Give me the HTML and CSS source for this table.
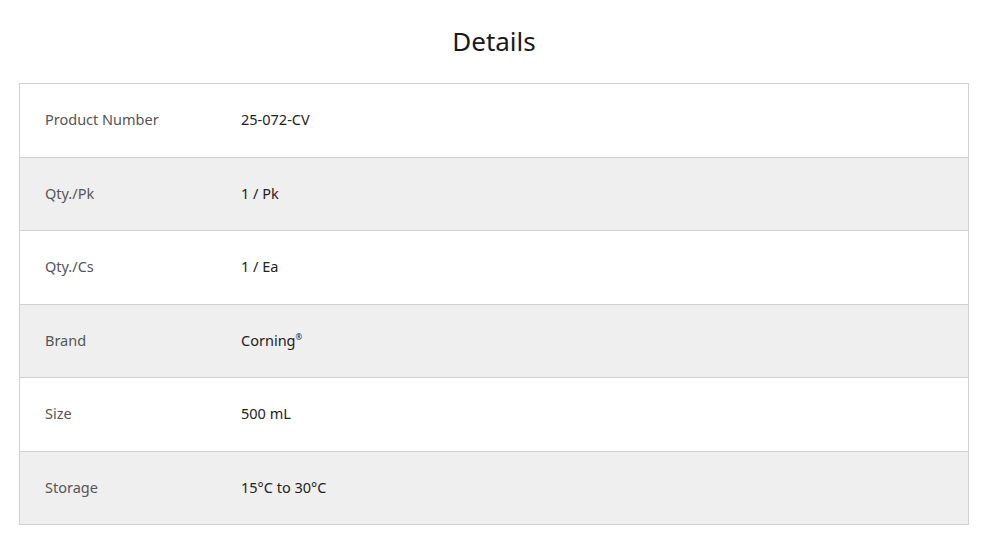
FILE: index.html
```html
<!DOCTYPE html>
<html>
<head>
<meta charset="utf-8">
<link rel="stylesheet" href="styles.css">
</head>
<body>
<section class="details">
  <h2 class="title">Details</h2>
  <table class="spec">
    <tr><td class="label">Product Number</td><td class="value">25-072-CV</td></tr>
    <tr><td class="label">Qty./Pk</td><td class="value">1 / Pk</td></tr>
    <tr><td class="label">Qty./Cs</td><td class="value">1 / Ea</td></tr>
    <tr><td class="label">Brand</td><td class="value">Corning<sup class="reg">®</sup></td></tr>
    <tr><td class="label">Size</td><td class="value">500 mL</td></tr>
    <tr><td class="label">Storage</td><td class="value">15°C to 30°C</td></tr>
  </table>
</section>
</body>
</html>
```
FILE: styles.css
```css
html, body {
  margin: 0;
  padding: 0;
  background: #fff;
}
body {
  font-family: "Noto Sans", "Open Sans", sans-serif;
  color: #222;
}
.details {
  width: 950px;
  margin-left: 19px;
  padding-top: 22px;
}
.title {
  margin: 0 0 23px;
  text-align: center;
  font-weight: 400;
  font-size: 26px;
  line-height: 38px;
  color: #1a1a1a;
}
.spec {
  width: 100%;
  border-collapse: collapse;
  border: 1px solid #d0d0d0;
}
.spec tr {
  height: 73.5px;
}
.spec tr:nth-child(even) {
  background: #efefef;
}
.spec td {
  border-top: 1px solid #d0d0d0;
  padding: 0 0 2px;
  font-size: 14.5px;
  vertical-align: middle;
}
.label {
  width: 196px;
  padding-left: 25px !important;
  color: #555;
}
.value {
  color: #222;
}
.reg {
  font-size: 8px;
  vertical-align: 6px;
  line-height: 0;
}
```
